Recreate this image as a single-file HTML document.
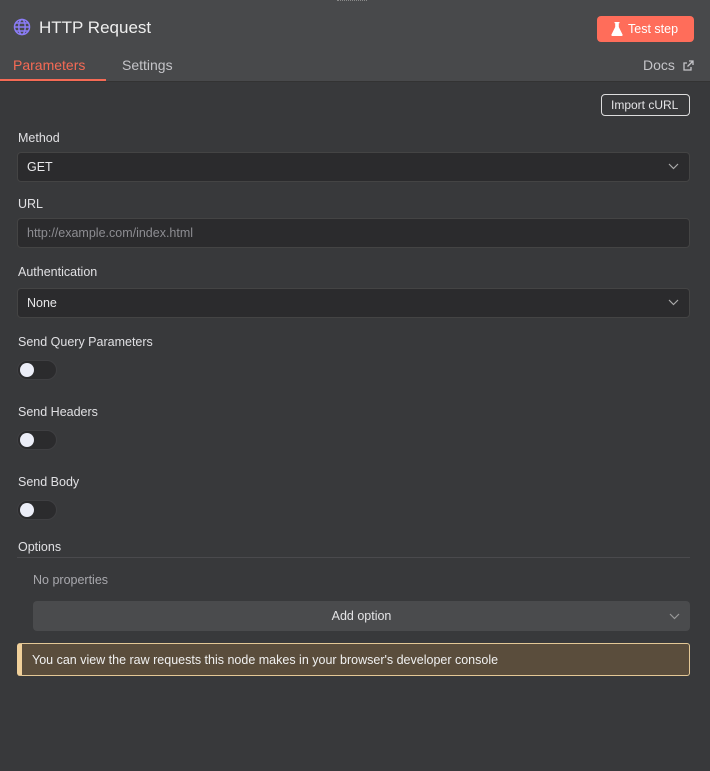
<!DOCTYPE html>
<html><head><meta charset="utf-8"><style>
*{box-sizing:border-box;margin:0;padding:0}
body{width:710px;height:771px;background:#38393b;font-family:"Liberation Sans",sans-serif;color:#e4e4e6;position:relative;overflow:hidden}
.hdr{position:absolute;left:0;top:0;width:710px;height:82px;background:#48494b;border-bottom:1px solid #333}
.abs{position:absolute}
.lbl{position:absolute;left:18px;font-size:12.5px;color:#e0e0e3}
.inp{position:absolute;left:17px;width:673px;height:30px;background:#2b2b2d;border:1px solid #444;border-radius:4px;font-size:12.5px;padding:7px 9px;color:#e8e8ea}
.chev{position:absolute;right:10px;top:10px}
.tog{position:absolute;left:17px;width:40px;height:20px;border-radius:10px;background:#2b2b2d;border:1px solid #3f3f42}
.tog:after{content:"";position:absolute;left:2px;top:2px;width:14px;height:14px;border-radius:50%;background:#eceef8}
</style></head><body>
<div class="hdr">
 <div class="abs" style="left:337px;top:0;width:30px;height:2px;border-top:1px dotted #888"></div>
 <svg class="abs" style="left:13px;top:18px" width="18" height="18" viewBox="0 0 18 18" fill="none" stroke="#8b7cf6" stroke-width="1.5"><circle cx="9" cy="9" r="7.5"/><ellipse cx="9" cy="9" rx="3.2" ry="7.5"/><path d="M1.5 9h15M2.8 5h12.4M2.8 13h12.4"/></svg>
 <div class="abs" style="left:39px;top:18px;font-size:17px;color:#eee">HTTP Request</div>
 <div class="abs" style="left:597px;top:16px;width:97px;height:26px;background:#ff6d5a;border-radius:4px;color:#fff;font-size:12.5px;padding:6px 0 0 31px">Test step</div>
 <svg class="abs" style="left:611px;top:22px" width="12" height="14" viewBox="0 0 12 14" fill="#fff"><path d="M3.5 0h5v1.2H7.8v3.8L11.5 12.5A1 1 0 0 1 10.6 14H1.4A1 1 0 0 1 .5 12.5L4.2 5V1.2H3.5z"/></svg>
 <div class="abs" style="left:13px;top:57px;font-size:14px;color:#f56a55">Parameters</div>
 <div class="abs" style="left:0;top:79px;width:106px;height:2px;background:#f56a55"></div>
 <div class="abs" style="left:122px;top:57px;font-size:14px;color:#c4c4c8">Settings</div>
 <div class="abs" style="left:643px;top:57px;font-size:14px;color:#c4c4c8">Docs</div>
 <svg class="abs" style="left:683px;top:60px" width="11" height="11" viewBox="0 0 11 11" fill="none" stroke="#c4c4c8" stroke-width="1.3"><path d="M6 1h4v4M10 1 4.5 6.5M8 7v3H1V3h3"/></svg>
</div>
<div class="abs" style="left:601px;top:94px;width:89px;height:22px;border:1px solid #ddd;border-radius:4px;font-size:12px;padding:3px 0 0 9px">Import cURL</div>
<div class="lbl" style="top:131px">Method</div>
<div class="inp" style="top:152px">GET<svg class="chev" width="11" height="7" viewBox="0 0 11 7" fill="none" stroke="#aaa" stroke-width="1.2"><path d="M1 1l4.5 4.5L10 1"/></svg></div>
<div class="lbl" style="top:197px">URL</div>
<div class="inp" style="top:218px;color:#8d8d92">http://example.com/index.html</div>
<div class="lbl" style="top:265px">Authentication</div>
<div class="inp" style="top:288px">None<svg class="chev" width="11" height="7" viewBox="0 0 11 7" fill="none" stroke="#aaa" stroke-width="1.2"><path d="M1 1l4.5 4.5L10 1"/></svg></div>
<div class="lbl" style="top:335px">Send Query Parameters</div>
<div class="tog" style="top:360px"></div>
<div class="lbl" style="top:405px">Send Headers</div>
<div class="tog" style="top:430px"></div>
<div class="lbl" style="top:475px">Send Body</div>
<div class="tog" style="top:500px"></div>
<div class="lbl" style="top:540px">Options</div>
<div class="abs" style="left:17px;top:557px;width:673px;height:1px;background:#4a4a4d"></div>
<div class="abs" style="left:33px;top:573px;font-size:12.5px;color:#a8a8ad">No properties</div>
<div class="abs" style="left:33px;top:601px;width:657px;height:30px;background:#4a4b4d;border-radius:4px;font-size:12.5px;text-align:center;padding-top:8px">Add option<svg class="chev" style="top:12px" width="11" height="7" viewBox="0 0 11 7" fill="none" stroke="#999" stroke-width="1.2"><path d="M1 1l4.5 4.5L10 1"/></svg></div>
<div class="abs" style="left:17px;top:643px;width:673px;height:33px;background:#5a4d3c;border:1px solid #e4c896;border-left:5px solid #f0d09a;border-radius:3px;font-size:12.5px;padding:9px 0 0 10px;color:#f0f0f0">You can view the raw requests this node makes in your browser's developer console</div>
</body></html>
